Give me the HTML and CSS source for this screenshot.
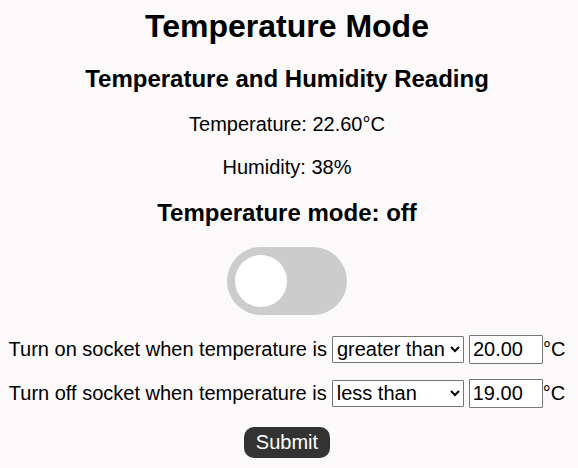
FILE: index.html
```
<!DOCTYPE html>
<html lang="en">
<head>
<meta charset="utf-8">
<meta name="viewport" content="width=device-width, initial-scale=1">
<title>Temperature Mode</title>
<link rel="stylesheet" href="styles.css">
</head>
<body>
<h1>Temperature Mode</h1>
<h2>Temperature and Humidity Reading</h2>
<p>Temperature: 22.60°C</p>
<p>Humidity: 38%</p>
<h2>Temperature mode: off</h2>
<label class="switch">
<input type="checkbox" aria-label="Temperature mode">
<span class="slider"></span>
</label>
<form>
<div class="row">
<label for="on-cond">Turn on socket when temperature is</label>
<select id="on-cond"><option>greater than</option><option>less than</option></select>
<span class="value"><input type="text" value="20.00" aria-label="Turn on temperature">°C</span>
</div>
<div class="row">
<label for="off-cond">Turn off socket when temperature is</label>
<select id="off-cond"><option>less than</option><option>greater than</option></select>
<span class="value"><input type="text" value="19.00" aria-label="Turn off temperature">°C</span>
</div>
<button type="submit">Submit</button>
</form>
</body>
</html>
```
FILE: styles.css
```
* {
  box-sizing: border-box;
}

body {
  margin: 0;
  padding: 7px 8px 9px 4px;
  background: #fbf9fa;
  color: #000;
  font-family: "Liberation Sans", Arial, sans-serif;
  font-size: 20px;
  line-height: 23px;
  display: flex;
  flex-direction: column;
  align-items: center;
}

h1 {
  margin: 0 0 20px;
  font-size: 32px;
  line-height: 38px;
}

h2 {
  margin: 0 0 20px;
  font-size: 24px;
  line-height: 28px;
}

p {
  margin: 0 0 20px;
}

.switch {
  position: relative;
  width: 120px;
  height: 68px;
}

.switch input {
  position: absolute;
  inset: 0;
  margin: 0;
  width: 100%;
  height: 100%;
  opacity: 0;
}

.slider {
  display: block;
  height: 100%;
  padding: 8px;
  border-radius: 34px;
  background: #ccc;
}

.slider::before {
  content: "";
  display: block;
  width: 52px;
  height: 52px;
  border-radius: 50%;
  background: #fff;
}

.switch input:checked + .slider::before {
  margin-left: auto;
}

form {
  margin-top: 20px;
  display: flex;
  flex-direction: column;
  align-items: center;
  gap: 15px;
}

.row {
  display: flex;
  align-items: center;
  gap: 5px;
  white-space: nowrap;
}

.value {
  display: flex;
  align-items: center;
}

select {
  width: 132px;
  height: 27px;
  padding: 0 0 2px;
  border: 1px solid #767676;
  border-radius: 1px;
  background-color: #fff;
  color: #000;
  font: inherit;
}

input[type="text"] {
  width: 74px;
  height: 29px;
  padding: 1px 3px;
  border: 1px solid #767676;
  border-radius: 1px;
  background: #fff;
  color: #000;
  font: inherit;
}

button {
  margin-top: 4px;
  padding: 4px 12px;
  border: 0;
  border-radius: 10px;
  background: #333;
  color: #fff;
  font: inherit;
}
```
